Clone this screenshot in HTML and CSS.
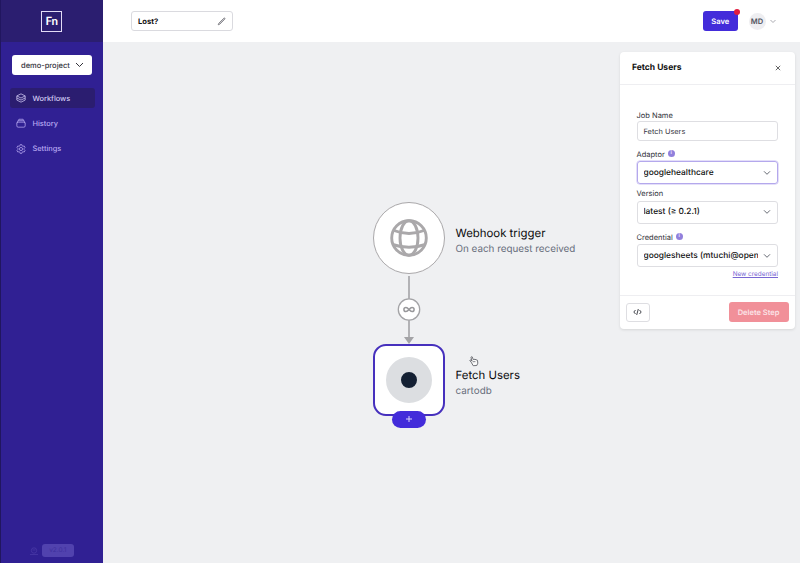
FILE: index.html
```html
<!DOCTYPE html>
<html lang="en">
<head>
<meta charset="utf-8">
<title>Workflow</title>
<link rel="stylesheet" href="styles.css">
</head>
<body>
<div class="app">
  <aside class="sidebar">
    <div class="brand"><div class="logo">Fn</div></div>
    <button class="project"><span>demo-project</span>
      <svg width="9" height="6" viewBox="0 0 9 6"><path d="M1 1l3.500 3.500L8 1"/></svg>
    </button>
    <nav class="nav">
      <a class="nav-item active"><svg width="10" height="10" viewBox="0 0 24 24"><path d="M12 2 22 7 12 12 2 7ZM2 7v5l10 5 10-5V7M2 12v5l10 5 10-5v-5"/></svg><span>Workflows</span></a>
      <a class="nav-item"><svg width="10" height="10" viewBox="0 0 24 24"><path d="M7 3h10M5 6.500h14M5 10h14a3 3 0 0 1 3 3v6a3 3 0 0 1-3 3H5a3 3 0 0 1-3-3v-6a3 3 0 0 1 3-3M2 13l3-6.500L7 3M22 13l-3-6.500L17 3"/></svg><span>History</span></a>
      <a class="nav-item"><svg width="10" height="10" viewBox="0 0 24 24"><path d="m10 1.500h4l.7 3 2 1 3-.8 2 3.500-2.200 2.300v3l2.200 2.300-2 3.500-3-.8-2 1-.7 3h-4l-.7-3-2-1-3 .8-2-3.500 2.200-2.300v-3L2.300 8.200l2-3.500 3 .8 2-1Z"/><circle cx="12" cy="12" r="3.800"/></svg><span>Settings</span></a>
    </nav>
    <div class="foot">
      <svg width="10" height="10" viewBox="0 0 10 10"><circle cx="5" cy="4.500" r="2.700"/><path d="M1 8.500h8M3.500 4h3"/></svg>
      <span class="version">v2.0.1</span>
    </div>
  </aside>
  <div class="main">
    <header class="topbar">
      <div class="title-field"><span>Lost?</span>
        <svg width="9" height="9" viewBox="0 0 10 10"><path d="M1.300 8.700 2 6.900 7.500 1.400Q8.300.8 8.800 1.400T8.600 2.500L3.100 8Z"/></svg>
      </div>
      <div class="account">
        <button class="save">Save<i></i></button>
        <span class="avatar">MD</span>
        <svg width="6" height="5" viewBox="0 0 6 5"><path d="M.5 1 3 3.500 5.500 1"/></svg>
      </div>
    </header>
    <main class="canvas">
      <svg class="edges" width="80" height="74" viewBox="0 0 80 74">
        <path d="M40 1v63" stroke="#a3a3a6" stroke-width="1.600"/>
        <path d="M35 62h10l-5 7Z" fill="#a3a3a6"/>
        <circle cx="40" cy="34.500" r="10.700" fill="#fff" stroke="#a3a3a6" stroke-width="1.300"/>
        <path d="M40 34.500C38.500 32.700 37.800 32.400 37 32.400a2.100 2.100 0 0 0 0 4.200C37.800 36.600 38.500 36.300 40 34.500S42.200 32.400 43 32.400a2.100 2.100 0 0 1 0 4.200C42.200 36.600 41.500 36.300 40 34.500Z" fill="none" stroke="#98989b" stroke-width="1.500"/>
      </svg>
      <div class="node trigger">
        <div class="shape round">
          <svg width="40" height="40" viewBox="0 0 40 40"><circle cx="20" cy="20" r="17.300"/><ellipse cx="20" cy="20" rx="9" ry="17.300"/><path d="M5 12.500Q20 18.500 35 12.500M3.500 26.500Q20 32 36.500 26.500"/></svg>
        </div>
        <div class="label"><strong>Webhook trigger</strong><span>On each request received</span></div>
      </div>
      <div class="node job">
        <div class="shape square"><div class="disc"></div></div>
        <div class="label"><strong>Fetch Users</strong><span>cartodb</span></div>
        <div class="add"><svg width="8" height="8" viewBox="0 0 8 8"><path d="M4 1v6M1 4h6"/></svg></div>
      </div>
      <svg class="pointer" width="10" height="11" viewBox="0 0 10 11"><path d="M2.200 6.200.9 4.700Q.7 3.800 1.700 4L3 5 2 1.500Q2.200.3 3.200.9L4.200 3.500 6 3.300 8.500 4.300 8.800 7.200 7.800 9.500 4.200 9.700Z"/><path d="M4.200 5v1.300M5.800 5v1.200"/></svg>
      <section class="panel">
        <div class="panel-head"><h2>Fetch Users</h2><svg width="6" height="6" viewBox="0 0 6 6"><path d="m.8.8 4.400 4.400M5.200.8.8 5.200"/></svg></div>
        <div class="panel-body">
          <label>Job Name</label>
          <div class="input">Fetch Users</div>
          <label class="adaptor">Adaptor <i class="info">i</i></label>
          <div class="select focus"><span>googlehealthcare</span><svg width="8" height="6" viewBox="0 0 8 6"><path d="m1 1.300 3 3 3-3"/></svg></div>
          <label class="ver">Version</label>
          <div class="select"><span>latest (≥ 0.2.1)</span><svg width="8" height="6" viewBox="0 0 8 6"><path d="m1 1.300 3 3 3-3"/></svg></div>
          <label class="cred">Credential <i class="info">i</i></label>
          <div class="select"><span>googlesheets (mtuchi@open</span><svg width="8" height="6" viewBox="0 0 8 6"><path d="m1 1.300 3 3 3-3"/></svg></div>
          <a class="new">New credential</a>
        </div>
        <div class="panel-foot">
          <button class="code"><svg width="9" height="8" viewBox="0 0 9 8"><path d="M2.500 2 .8 4l1.700 2M6.500 2l1.700 2-1.700 2M5.300 1 3.700 7"/></svg></button>
          <button class="delete">Delete Step</button>
        </div>
      </section>
    </main>
  </div>
</div>
</body>
</html>
```
FILE: styles.css
```css
* { box-sizing: border-box; }
body { margin: 0; font-family: Inter, sans-serif; color: #111; text-rendering: geometricPrecision; }
button { font: inherit; border: 0; padding: 0; text-rendering: inherit; }
svg { display: block; fill: none; stroke: currentColor; flex: none; }
.app { display: flex; height: 563px; overflow: hidden; }

.sidebar { width: 102.5px; flex: none; background: #302093; border-left: 1px solid #21165f; display: flex; flex-direction: column; }
.brand { height: 42px; background: #2b1e70; display: flex; align-items: center; justify-content: center; }
.logo { width: 21px; height: 21px; border: 1px solid #e2dcf6; color: #fff; font: 700 11.5px/19px Lato, sans-serif; text-align: center; }
.project { height: 20px; margin: 13px 11px 0; padding: 0 8px 0 9px; background: #fff; border-radius: 3px; display: flex; align-items: center; justify-content: space-between; font-size: 7.500px; font-weight: 500; color: #33333b; }
.nav { display: flex; flex-direction: column; gap: 5.300px; margin: 13px 7.500px 0 9px; }
.nav-item { height: 20px; display: flex; align-items: center; gap: 6.500px; padding-left: 6px; border-radius: 3px; font-size: 7.400px; font-weight: 550; color: #b9aaf2; }
.nav-item svg { stroke-width: 1.800; }
.nav-item.active { background: #2b1d70; color: #d4ccf5; }
.foot { margin-top: auto; height: 19px; display: flex; align-items: flex-start; justify-content: center; gap: 3px; color: #4939a6; padding-right: 1px; }
.foot svg { margin-top: 2px; stroke-width: .8; }
.version { width: 32px; height: 13px; background: #5142ae; border-radius: 3px; color: #3f309d; font-size: 6.500px; line-height: 13px; text-align: center; }

.main { flex: 1; min-width: 0; display: flex; flex-direction: column; }
.topbar { height: 42px; background: #fff; display: flex; align-items: center; justify-content: space-between; padding: 0 24.500px 0 28.500px; }
.title-field { width: 101.500px; height: 20px; border: 1px solid #dadadf; border-radius: 3px; display: flex; align-items: center; justify-content: space-between; padding: 0 6px; font-size: 7.600px; font-weight: 700; }
.title-field svg { color: #77777d; fill: #c9c9cd; stroke-width: .9; }
.account { display: flex; align-items: center; color: #aaaab1; }
.save { position: relative; width: 35.500px; height: 20px; border-radius: 3px; background: #432cda; color: #fff; font-size: 7.600px; font-weight: 600; }
.save i { position: absolute; top: -2px; right: -2px; width: 6px; height: 6px; border-radius: 50%; background: #e11d3f; }
.avatar { width: 17px; height: 17px; margin: 0 4px 0 10.500px; border-radius: 50%; background: #eeeef1; color: #52545f; font-size: 7.500px; font-weight: 600; line-height: 17px; text-align: center; }

.canvas { flex: 1; position: relative; background: #eff0f2; }
.edges { position: absolute; left: 266.500px; top: 232.500px; stroke: none; }
.node { position: absolute; left: 270.500px; display: flex; align-items: center; gap: 10.500px; }
.trigger { top: 160px; }
.job { top: 301.500px; }
.shape { width: 72px; height: 72px; background: #fff; display: flex; align-items: center; justify-content: center; }
.round { border-radius: 50%; border: 1.500px solid #aaa8aa; color: #aaa8aa; }
.round svg { stroke-width: 2.900; }
.square { border-radius: 13px; border: 2px solid #4630bd; }
.disc { width: 46px; height: 46px; border-radius: 50%; border: 15px solid #dcdee1; background: #142033; }
.label { display: flex; flex-direction: column; white-space: nowrap; padding-top: 6.500px; }
.label strong { font-size: 11.400px; line-height: 16px; font-weight: 400; color: #0b0b0d; }
.label span { font-size: 9.850px; line-height: 16px; color: #676d7b; }
.add { position: absolute; left: 19px; top: 67px; width: 34px; height: 17px; border-radius: 9px; background: #432cda; color: #d9d3fb; display: flex; align-items: center; justify-content: center; }
.pointer { position: absolute; left: 366px; top: 314px; color: #606269; fill: #fafafa; stroke-width: .9; }

.panel { position: absolute; left: 517.500px; top: 9.500px; width: 174.500px; height: 277px; background: #fff; border-radius: 4px; box-shadow: 0 1px 3px #0000001c; display: flex; flex-direction: column; }
.panel-head { height: 33.500px; border-bottom: 1px solid #eeeef1; display: flex; align-items: center; justify-content: space-between; padding: 0 14px 0 12px; }
.panel-head h2 { margin: 1px 0 0; font-size: 8.500px; font-weight: 700; }
.panel-head svg { color: #555; stroke-width: .9; }
.panel-body { flex: 1; padding: 25.500px 16.500px 0 16.500px; display: flex; flex-direction: column; }
label { height: 10px; display: flex; align-items: center; font-size: 7.500px; color: #303239; flex: none; }
.info { width: 7px; height: 7px; margin: -2px 0 0 3px; border-radius: 50%; background: #9180dc; color: #e9e5ff; font: 700 5px/7px Inter, sans-serif; text-align: center; }
.input { height: 20.500px; border: 1px solid #dedee2; border-radius: 3px; padding-left: 6px; font-size: 7.400px; line-height: 19.500px; color: #33353c; flex: none; }
.select { height: 23px; flex: none; border: 1px solid #dedee2; border-radius: 3px; padding: 0 6px; display: flex; align-items: center; justify-content: space-between; font-size: 8.400px; font-weight: 550; }
.select span { width: 114px; overflow: hidden; white-space: nowrap; line-height: 14px; }
.select svg { color: #666a73; }
.focus { border-color: #b4a8ec; box-shadow: 0 0 0 .5px #c9c0f3; }
.adaptor { margin: 8px 0 2px; }
.ver { margin: 4px 0 2.500px; }
.cred { margin: 8.500px 0 2px; }
.new { align-self: flex-end; margin-top: 2px; font-size: 6.400px; line-height: 10px; color: #7866d3; text-decoration: underline; }
.panel-foot { height: 33.500px; border-top: 1px solid #eeeef1; display: flex; align-items: center; justify-content: space-between; padding: 0 6px; }
.code { width: 23.500px; height: 19px; border: 1px solid #dedee2; border-radius: 3px; background: #fff; color: #44464d; display: flex; align-items: center; justify-content: center; }
.delete { width: 60px; height: 20px; border-radius: 3px; background: #f19099; color: #fbe3e7; font-size: 7.500px; font-weight: 600; }
```
